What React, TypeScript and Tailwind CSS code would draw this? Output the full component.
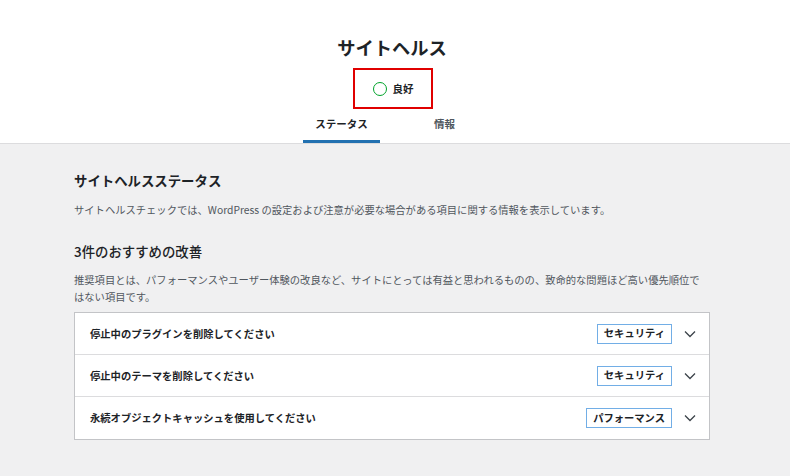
import React from "react";

const font = { fontFamily: '"Noto Sans CJK JP", "Noto Sans", sans-serif' };

function Chevron() {
  return (
    <svg width="12" height="8" viewBox="0 0 12 8" className="text-[#3c434a]">
      <path d="M1 1.5 L6 6.5 L11 1.5" fill="none" stroke="currentColor" strokeWidth="1.3" />
    </svg>
  );
}

function Row({ title, badge, last }: { title: string; badge: string; last?: boolean }) {
  return (
    <div className={`flex items-center h-[42px] pl-[15px] pr-[13px] ${last ? "" : "border-b border-[#dcdcde]"}`}>
      <div className="flex-1 text-[10.3px] font-bold text-[#1d2327]">{title}</div>
      <div className="border border-[#72aee6] h-[20px] px-[6px] flex items-center text-[10.3px] font-bold text-[#1d2327] leading-none">
        {badge}
      </div>
      <div className="ml-[12px] w-[12px] flex items-center justify-center">
        <Chevron />
      </div>
    </div>
  );
}

export default function App() {
  return (
    <div style={font} className="w-[790px] h-[476px] bg-[#f0f0f1] overflow-hidden">
      <div className="bg-white h-[144px] flex flex-col items-center border-b border-[#dcdcde]">
        <h1 className="pt-[34px] ml-[-6px] text-[18.3px] leading-[26px] font-bold text-[#1d2327]">サイトヘルス</h1>
        <div className="mt-[8px] ml-[-4px] w-[80px] h-[42px] border-2 border-[#e00000] flex items-center justify-center gap-[6px]">
          <span className="w-[14px] h-[14px] rounded-full border-[1.5px] border-[#00a32a]"></span>
          <span className="text-[10.5px] font-bold text-[#1d2327]">良好</span>
        </div>
        <div className="flex h-[34px] gap-[26px] mr-[4px]">
          <div className="w-[77px] pt-[7px] text-center text-[10.5px] leading-[16px] font-bold text-[#1d2327] border-b-[3px] border-[#2271b1]">
            ステータス
          </div>
          <div className="w-[77px] pt-[7px] text-center text-[10.5px] leading-[16px] font-bold text-[#50575e]">
            情報
          </div>
        </div>
      </div>
      <div className="w-[636px] ml-[74px] pt-[27px]">
        <h2 className="text-[13.4px] leading-[18px] font-bold text-[#1d2327]">サイトヘルスステータス</h2>
        <p className="mt-[12px] text-[10.3px] leading-[18px] text-[#50575e] whitespace-nowrap">
          サイトヘルスチェックでは、WordPress の設定および注意が必要な場合がある項目に関する情報を表示しています。
        </p>
        <h3 className="mt-[22px] text-[13.4px] leading-[20px] font-medium text-[#1d2327]">3件のおすすめの改善</h3>
        <p className="mt-[10px] text-[10.3px] leading-[17px] text-[#50575e]">
          <span className="whitespace-nowrap">推奨項目とは、パフォーマンスやユーザー体験の改良など、サイトにとっては有益と思われるものの、致命的な問題ほど高い優先順位で</span>
          <br />
          はない項目です。
        </p>
        <div className="mt-[7px] bg-white border border-[#c3c4c7]">
          <Row title="停止中のプラグインを削除してください" badge="セキュリティ" />
          <Row title="停止中のテーマを削除してください" badge="セキュリティ" />
          <Row title="永続オブジェクトキャッシュを使用してください" badge="パフォーマンス" last />
        </div>
      </div>
    </div>
  );
}
